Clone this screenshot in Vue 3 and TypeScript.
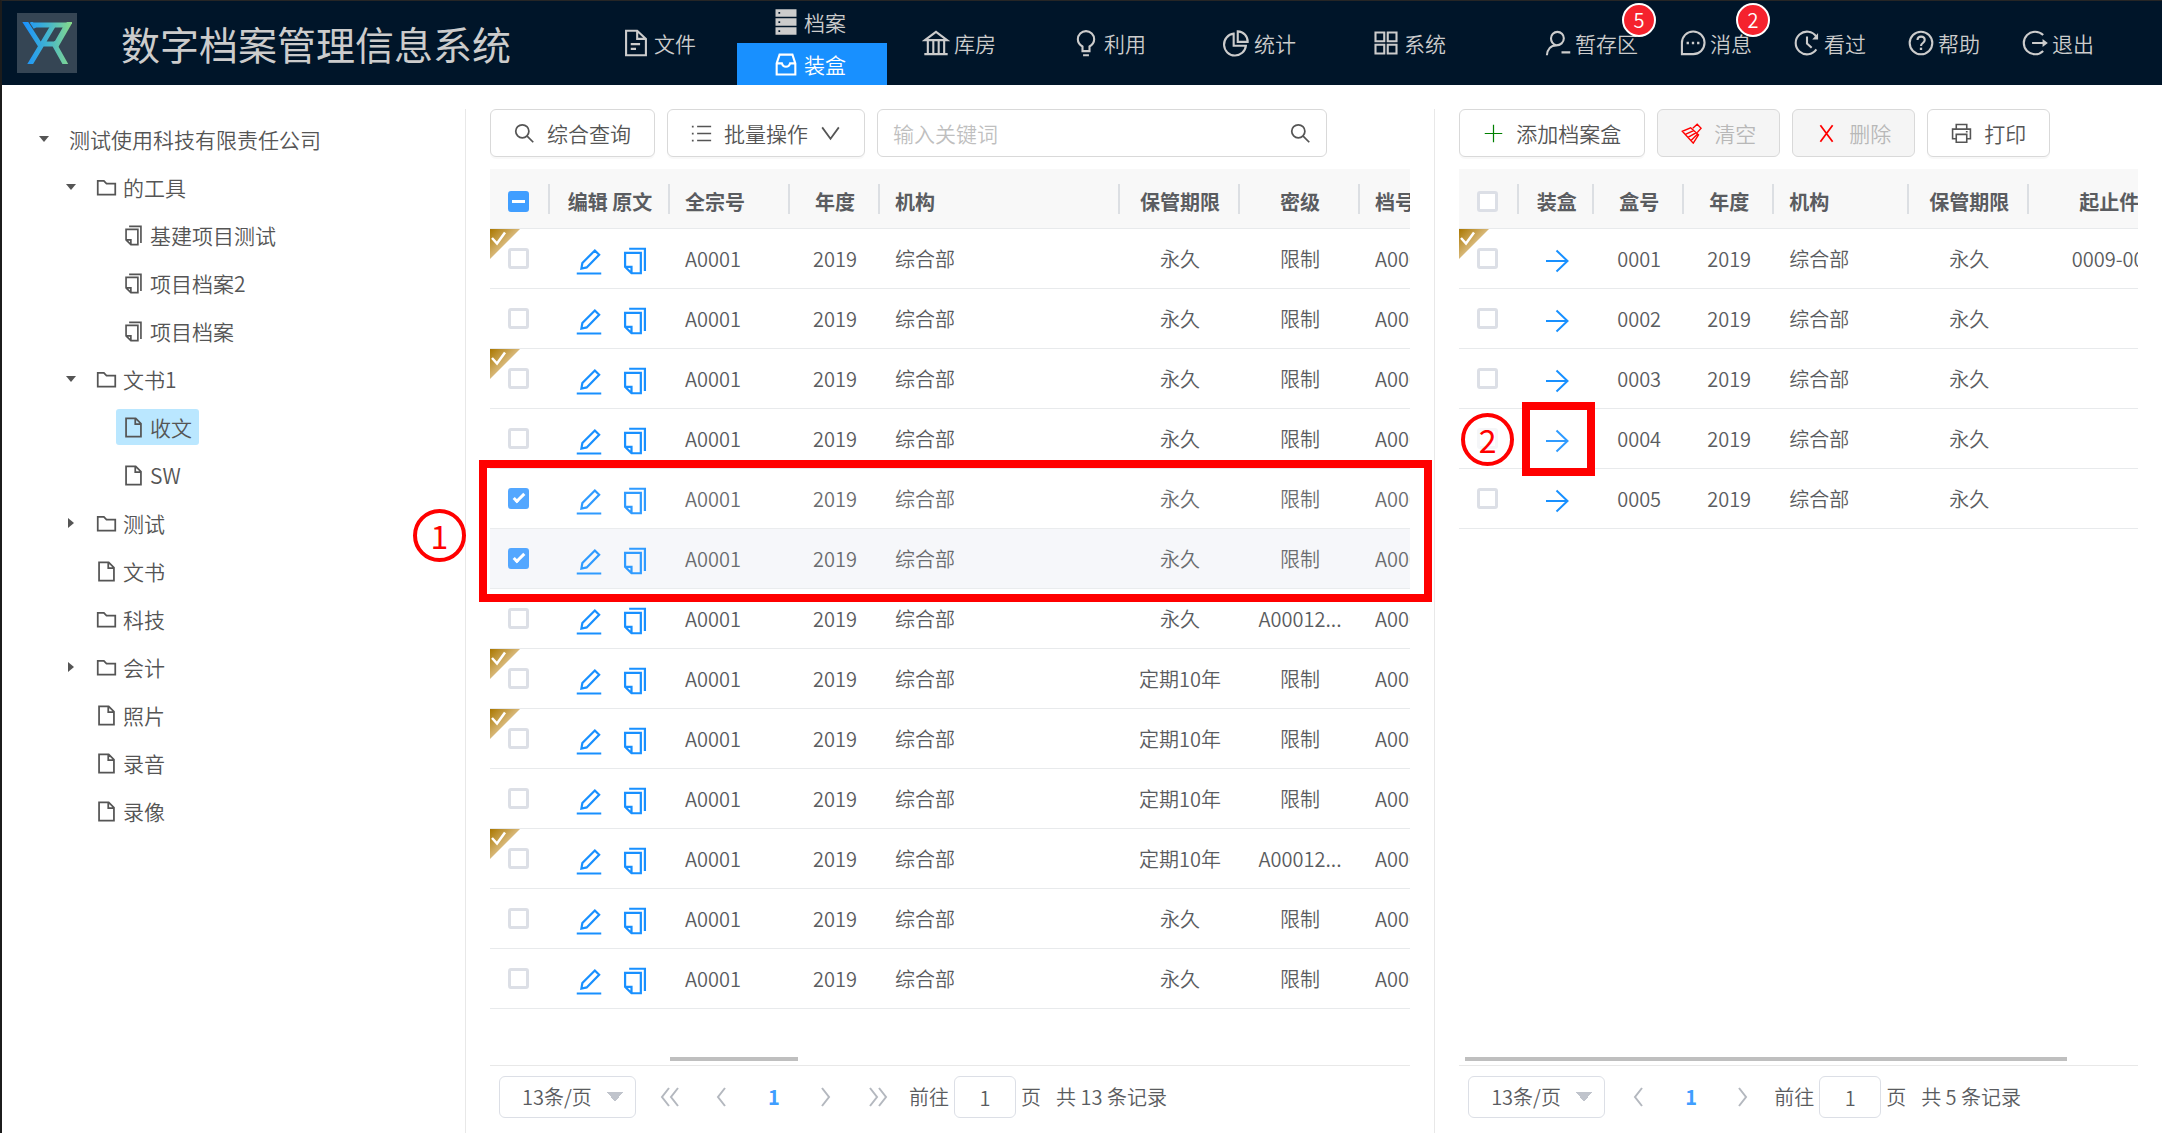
<script setup lang="ts">
import { computed, h, ref, type FunctionalComponent } from 'vue'

interface Shape { d: string; fill?: string; w?: number }
interface NavItem { label: string; icon: string; sub?: { label: string; icon: string } }
interface UserItem { label: string; icon: string; badge?: number }
interface TreeNode { label: string; level: number; icon?: string; caret?: 'open' | 'closed'; active?: boolean }
interface FileRow { id: number; packed: boolean; checked: boolean; hover: boolean; period: string; secret: string }
interface BoxRow { no: string; packed: boolean; range: string; checked: boolean }

const icons: Record<string, Shape[]> = {
  fileText: [{ d: 'M3.5 1.5H13l7.500 7V22.500h-17zM13 1.500v7h7.500M7.500 13h8M7.500 17h4.500', w: 1.8 }],
  server: [
    { d: 'M3 1h18v6.400H3zM3 8.800h18v6.400H3zM3 16.600h18V23H3z', fill: 'currentColor' },
    { d: 'M5.500 3.500H7V5H5.500zM5.500 11.300H7v1.500H5.500zM5.500 19H7v1.500H5.500z', fill: '#001529' },
  ],
  box: [{ d: 'M4 11.500L6.500 4h11L20 11.500V21H4zM4 11.500h4.500c.5 1.800 1.600 2.800 3.500 2.800s3-1 3.500-2.800H20', w: 1.8 }],
  bank: [{ d: 'M2.500 9.500L12 2.500l9.500 7zM5 10v11M9.700 10v11M14.300 10v11M19 10v11M2 21.500h20', w: 1.8 }],
  bulb: [{ d: 'M9 19v-4C6.500 13.500 5 11.500 5 8.800a7 7 0 0 1 14 0c0 2.700-1.500 4.700-4 6.200v4zM9.500 22.500h5', w: 1.8 }],
  pie: [{ d: 'M10 4a9.400 9.400 0 1 0 10.500 10.300H10zM13.500 2v9h8.500A8.800 8.800 0 0 0 13.500 2z', w: 1.8 }],
  grid: [{ d: 'M3 3h7.500v7.500H3zM13.500 3H21v7.500h-7.500zM3 13.500h7.500V21H3zM13.500 13.500H21V21h-7.500z', w: 1.8 }],
  user: [{ d: 'M2.500 22.500c.4-5.300 3.500-8.500 8-8.500 3.600 0 6.500-2.500 6.500-6A5.500 5.500 0 0 0 6 8c0 2.600 1.700 5.200 4.500 6M15 20h7.500', w: 1.8 }],
  message: [
    { d: 'M2.500 21.500V12A9.700 9.700 0 1 1 12 21.500z', w: 1.8 },
    { d: 'M6.500 11h2v2h-2zM11 11h2v2h-2zM15.500 11h2v2h-2z', fill: 'currentColor' },
  ],
  history: [
    { d: 'M20 6.500a9.700 9.700 0 1 0 0 11M12 6.500v6l4 3.500', w: 1.8 },
    { d: 'M21.500 3.500v5.500h-5z', fill: 'currentColor' },
  ],
  question: [
    { d: 'M12 2.300a9.700 9.700 0 1 0 0 19.400 9.700 9.700 0 0 0 0-19.400zM9 9.500c0-4 6.200-4 6.200 0 0 2.500-3.200 2.500-3.200 5', w: 1.8 },
    { d: 'M11 16h2v2h-2z', fill: 'currentColor' },
  ],
  logout: [
    { d: 'M19 5.200a9.700 9.700 0 1 0 0 13.600M9.500 12H20', w: 1.8 },
    { d: 'M18.500 8.500L23 12l-4.500 3.500z', fill: 'currentColor' },
  ],
  folder: [{ d: 'M2 4.500h7l3 3h10V20H2z' }],
  file: [{ d: 'M3.500 1.500h11l6 6v15h-17zM14 1.500V8h6.500' }],
  copy: [{ d: 'M7 1.500h13.500v19M3.500 5h13.500v17.500H9L3.500 17zM3.500 17H9v5.500', w: 1.9 }],
  search: [{ d: 'M9.500 2a7.500 7.500 0 1 0 0 15 7.500 7.500 0 0 0 0-15zM15 15l7 7' }],
  list: [
    { d: 'M7 4h16M7 12h16M7 20h16', w: 1.7 },
    { d: 'M1 3h2v2H1zM1 11h2v2H1zM1 19h2v2H1z', fill: 'currentColor' },
  ],
  down: [{ d: 'M2.500 5L12 18l9.500-13' }],
  plus: [{ d: 'M12 2v20M2 12h20', w: 1.4 }],
  clear: [{ d: 'M13.500 6L18.500 1.500 23 6l-4.500 5M11 5.500l9 8L14 23 1.500 9.500zM5 13l10-4.500M8 16.500l9.500-5.500M11.500 20l7.500-7.500', w: 1.6 }],
  close: [{ d: 'M5 2.500l14 19M19 2.500L5 21.500' }],
  printer: [{ d: 'M6 7V1.800h12V7M6 18H1.800V7h20.400v11H18M6 13h12v9H6zM17 10h2', w: 1.8 }],
  edit: [{ d: 'M1.500 22.700h21M5.500 18.500l.8-4.800L17 3l3.700 3.700L10 17.500z', w: 1.9 }],
  arrow: [{ d: 'M1 12h21M11.500 1.500L22.500 12 11.500 22.500' }],
}

const Icon: FunctionalComponent<{ name: string }> = (props) =>
  h(
    'svg',
    { viewBox: '0 0 24 24', 'aria-hidden': 'true' },
    icons[props.name].map((s) =>
      h('path', {
        d: s.d,
        fill: s.fill ?? 'none',
        stroke: s.fill ? 'none' : 'currentColor',
        'stroke-width': s.w ?? 2,
      }),
    ),
  )

const nav: NavItem[] = [
  { label: '文件', icon: 'fileText' },
  { label: '档案', icon: 'server', sub: { label: '装盒', icon: 'box' } },
  { label: '库房', icon: 'bank' },
  { label: '利用', icon: 'bulb' },
  { label: '统计', icon: 'pie' },
  { label: '系统', icon: 'grid' },
]

const userItems: UserItem[] = [
  { label: '暂存区', icon: 'user', badge: 5 },
  { label: '消息', icon: 'message', badge: 2 },
  { label: '看过', icon: 'history' },
  { label: '帮助', icon: 'question' },
  { label: '退出', icon: 'logout' },
]

const tree: TreeNode[] = [
  { label: '测试使用科技有限责任公司', level: 1, caret: 'open' },
  { label: '的工具', level: 2, icon: 'folder', caret: 'open' },
  { label: '基建项目测试', level: 3, icon: 'copy' },
  { label: '项目档案2', level: 3, icon: 'copy' },
  { label: '项目档案', level: 3, icon: 'copy' },
  { label: '文书1', level: 2, icon: 'folder', caret: 'open' },
  { label: '收文', level: 3, icon: 'file', active: true },
  { label: 'SW', level: 3, icon: 'file' },
  { label: '测试', level: 2, icon: 'folder', caret: 'closed' },
  { label: '文书', level: 2, icon: 'file' },
  { label: '科技', level: 2, icon: 'folder' },
  { label: '会计', level: 2, icon: 'folder', caret: 'closed' },
  { label: '照片', level: 2, icon: 'file' },
  { label: '录音', level: 2, icon: 'file' },
  { label: '录像', level: 2, icon: 'file' },
]

const packedRows = [1, 3, 8, 9, 11]
const files = ref<FileRow[]>(
  Array.from({ length: 13 }, (_, i) => {
    const id = i + 1
    return {
      id,
      packed: packedRows.includes(id),
      checked: id === 5 || id === 6,
      hover: id === 6,
      period: id >= 8 && id <= 11 ? '定期10年' : '永久',
      secret: id === 7 || id === 11 ? 'A00012...' : '限制',
    }
  }),
)

const boxes = ref<BoxRow[]>(
  ['0001', '0002', '0003', '0004', '0005'].map((no, i) => ({
    no,
    packed: i === 0,
    range: i === 0 ? '0009-0010' : '',
    checked: false,
  })),
)

const someChecked = computed(() => files.value.some((f) => f.checked) && !files.value.every((f) => f.checked))
const keyword = ref('')
const filePage = ref('1')
const boxPage = ref('1')
</script>

<template>
  <div class="app">
    <header class="top">
      <svg class="logo" viewBox="0 0 60 60" aria-hidden="true">
        <defs>
          <linearGradient id="logo-g" x1="6" y1="0" x2="54" y2="0" gradientUnits="userSpaceOnUse">
            <stop offset="0" stop-color="#1890ff" />
            <stop offset=".5" stop-color="#41b3d0" />
            <stop offset="1" stop-color="#86d98a" />
          </linearGradient>
          <clipPath id="logo-c"><rect x="5" y="9" width="50" height="42" /></clipPath>
        </defs>
        <rect width="60" height="60" fill="#354554" />
        <g clip-path="url(#logo-c)" fill="none" stroke="url(#logo-g)" stroke-width="5">
          <path d="M7 7l16 25M36 13L12 53M24 31h13M36 29l14 25" />
          <path d="M16 12h34L38 33" />
          <path d="M14 9l4 6" stroke-width="3" />
          <path d="M54 7L39 33" />
        </g>
      </svg>
      <h1>数字档案管理信息系统</h1>
      <nav class="nav">
        <div v-for="n in nav" :key="n.label" class="nav-item">
          <a href="#" class="nav-link">
            <Icon :name="n.icon" class="ico ico-lg" />
            <span>{{ n.label }}</span>
          </a>
          <a v-if="n.sub" href="#" class="nav-link current">
            <Icon :name="n.sub.icon" class="ico ico-lg" />
            <span>{{ n.sub.label }}</span>
          </a>
        </div>
      </nav>
      <div class="user-nav">
        <a v-for="u in userItems" :key="u.label" href="#" class="user-link">
          <Icon :name="u.icon" class="ico ico-lg" />
          <span>{{ u.label }}</span>
          <span v-if="u.badge" class="badge">{{ u.badge }}</span>
        </a>
      </div>
    </header>

    <main class="body">
      <aside class="side">
        <ul class="tree">
          <li v-for="(t, i) in tree" :key="i" :class="['node', 'level-' + t.level]">
            <span class="caret-slot"><i v-if="t.caret" :class="['caret', t.caret]"></i></span>
            <a href="#" class="node-label" :class="{ active: t.active }">
              <Icon v-if="t.icon" :name="t.icon" class="ico" />
              <span>{{ t.label }}</span>
            </a>
          </li>
        </ul>
        <span class="mark mark-one">1</span>
      </aside>

      <section class="panel files">
        <div class="toolbar">
          <button type="button" class="btn"><Icon name="search" class="ico" /><span>综合查询</span></button>
          <button type="button" class="btn">
            <Icon name="list" class="ico" /><span>批量操作</span><Icon name="down" class="ico" />
          </button>
          <label class="search">
            <input v-model="keyword" type="text" placeholder="输入关键词" aria-label="输入关键词" />
            <Icon name="search" class="ico" />
          </label>
        </div>

        <div class="grid">
          <table class="file-table">
            <colgroup>
              <col class="w60" /><col class="w120" /><col class="w120" /><col class="w90" />
              <col class="w240" /><col class="w120" /><col class="w120" /><col class="w180" />
            </colgroup>
            <thead>
              <tr>
                <th><input type="checkbox" class="check" aria-label="全选" :indeterminate="someChecked" /></th>
                <th>编辑 原文</th>
                <th class="left">全宗号</th>
                <th>年度</th>
                <th class="left">机构</th>
                <th>保管期限</th>
                <th>密级</th>
                <th class="left">档号</th>
              </tr>
            </thead>
            <tbody>
              <tr v-for="f in files" :key="f.id" :class="{ hover: f.hover }">
                <td class="check-cell">
                  <svg v-if="f.packed" class="corner" viewBox="0 0 30 30" aria-hidden="true">
                    <path d="M0 0h30L0 30z" fill="url(#gold)" />
                    <path d="M2 9l5 5.500L15 3.500" fill="none" stroke="#fff" stroke-width="2.500" />
                  </svg>
                  <input v-model="f.checked" type="checkbox" class="check" :aria-label="'选择第' + f.id + '行'" />
                </td>
                <td>
                  <div class="actions pair">
                    <button type="button" class="link" aria-label="编辑"><Icon name="edit" class="ico ico-lg" /></button>
                    <button type="button" class="link" aria-label="原文"><Icon name="copy" class="ico ico-lg" /></button>
                  </div>
                </td>
                <td class="left">A0001</td>
                <td>2019</td>
                <td class="left">综合部</td>
                <td>{{ f.period }}</td>
                <td>{{ f.secret }}</td>
                <td class="left">A0001</td>
              </tr>
            </tbody>
          </table>
          <div class="track"><div class="thumb thumb-files"></div></div>
        </div>

        <div class="pager">
          <select aria-label="每页条数"><option>13条/页</option></select>
          <div class="pages">
            <button type="button" aria-label="首页">
              <svg viewBox="0 0 20 20" aria-hidden="true"><path d="M9 1L2 10l7 9M18 1l-7 9 7 9" /></svg>
            </button>
            <button type="button" aria-label="上一页">
              <svg viewBox="0 0 20 20" aria-hidden="true"><path d="M13 1l-7 9 7 9" /></svg>
            </button>
            <button type="button" class="on">1</button>
            <button type="button" aria-label="下一页">
              <svg viewBox="0 0 20 20" aria-hidden="true"><path d="M6 1l7 9-7 9" /></svg>
            </button>
            <button type="button" aria-label="末页">
              <svg viewBox="0 0 20 20" aria-hidden="true"><path d="M2 1l7 9-7 9M11 1l7 9-7 9" /></svg>
            </button>
          </div>
          <label class="jump">前往 <input v-model="filePage" type="text" /> 页</label>
          <span class="total">共 13 条记录</span>
        </div>
        <div class="frame frame-rows"></div>
      </section>

      <section class="panel boxes">
        <div class="toolbar">
          <button type="button" class="btn"><Icon name="plus" class="ico green" /><span>添加档案盒</span></button>
          <button type="button" class="btn" disabled><Icon name="clear" class="ico red" /><span>清空</span></button>
          <button type="button" class="btn" disabled><Icon name="close" class="ico red" /><span>删除</span></button>
          <button type="button" class="btn"><Icon name="printer" class="ico" /><span>打印</span></button>
        </div>

        <div class="grid">
          <table class="box-table">
            <colgroup>
              <col class="w60" /><col class="w75" /><col class="w90" /><col class="w90" />
              <col class="w135" /><col class="w120" /><col class="w180" />
            </colgroup>
            <thead>
              <tr>
                <th><input type="checkbox" class="check" aria-label="全选" /></th>
                <th>装盒</th>
                <th>盒号</th>
                <th>年度</th>
                <th class="left">机构</th>
                <th>保管期限</th>
                <th>起止件号</th>
              </tr>
            </thead>
            <tbody>
              <tr v-for="(b, bi) in boxes" :key="b.no">
                <td class="check-cell">
                  <svg v-if="b.packed" class="corner" viewBox="0 0 30 30" aria-hidden="true">
                    <path d="M0 0h30L0 30z" fill="url(#gold)" />
                    <path d="M2 9l5 5.500L15 3.500" fill="none" stroke="#fff" stroke-width="2.500" />
                  </svg>
                  <input v-model="b.checked" type="checkbox" class="check" :aria-label="'选择盒' + b.no" />
                  <span v-if="bi === 3" class="mark mark-two">2</span>
                </td>
                <td class="pack-cell">
                  <div class="actions">
                    <button type="button" class="link" aria-label="装盒"><Icon name="arrow" class="ico ico-md" /></button>
                  </div>
                  <div v-if="bi === 3" class="frame frame-pack"></div>
                </td>
                <td>{{ b.no }}</td>
                <td>2019</td>
                <td class="left">综合部</td>
                <td>永久</td>
                <td>{{ b.range }}</td>
              </tr>
            </tbody>
          </table>
          <div class="track"><div class="thumb thumb-boxes"></div></div>
        </div>

        <div class="pager">
          <select aria-label="每页条数"><option>13条/页</option></select>
          <div class="pages">
            <button type="button" aria-label="上一页">
              <svg viewBox="0 0 20 20" aria-hidden="true"><path d="M13 1l-7 9 7 9" /></svg>
            </button>
            <button type="button" class="on">1</button>
            <button type="button" aria-label="下一页">
              <svg viewBox="0 0 20 20" aria-hidden="true"><path d="M6 1l7 9-7 9" /></svg>
            </button>
          </div>
          <label class="jump">前往 <input v-model="boxPage" type="text" /> 页</label>
          <span class="total">共 5 条记录</span>
        </div>
      </section>
    </main>

    <svg class="defs" width="0" height="0" aria-hidden="true">
      <defs>
        <linearGradient id="gold" x1="0" y1="0" x2=".5" y2=".5">
          <stop offset="0" stop-color="#aa7700" />
          <stop offset="1" stop-color="#d8b878" />
        </linearGradient>
      </defs>
    </svg>
  </div>
</template>

<style>
body {
  margin: 0;
  background: #fff;
}
</style>

<style scoped>
.app {
  display: flex;
  flex-direction: column;
  min-height: 100vh;
  box-sizing: border-box;
  border-top: 1px solid #262626;
  border-left: 2px solid #1c1c1c;
  font-family: "Noto Sans CJK SC", "Noto Sans", sans-serif;
  font-weight: 350;
  font-size: 21px;
  line-height: 30px;
  color: #555;
  overflow: hidden;
}
.app *,
.app *::before,
.app *::after {
  box-sizing: border-box;
}
a {
  color: inherit;
  text-decoration: none;
}
button,
input,
select {
  font: inherit;
  color: inherit;
}
.defs {
  position: absolute;
}
.ico {
  width: 21px;
  height: 21px;
  flex: none;
  display: block;
}
.ico-md {
  width: 24px;
  height: 24px;
}
.ico-lg {
  width: 28px;
  height: 28px;
}

/* header */
.top {
  display: flex;
  align-items: center;
  height: 84px;
  padding: 0 68px 0 15px;
  background: #001529;
  color: #ccc;
}
.logo {
  width: 60px;
  height: 60px;
  flex: none;
}
.top h1 {
  flex: none;
  margin: 0 76px 0 44px;
  font-size: 39px;
  line-height: 60px;
  font-weight: 400;
  white-space: nowrap;
}
.nav {
  display: flex;
  align-self: stretch;
}
.nav-item {
  display: flex;
  flex-direction: column;
  width: 150px;
}
.nav-link {
  flex: 1;
  display: flex;
  align-items: center;
  justify-content: center;
  gap: 4px;
  padding-right: 6px;
}
.nav-link.current {
  background: #1890ff;
  color: #fff;
}
.user-nav {
  display: flex;
  gap: 41px;
  margin-left: auto;
}
.user-link {
  position: relative;
  display: flex;
  align-items: center;
  gap: 3px;
}
.badge {
  position: absolute;
  right: -18px;
  bottom: 21px;
  width: 34px;
  height: 34px;
  border: 2px solid #fff;
  border-radius: 50%;
  background: #f5222d;
  color: #fff;
  font-size: 20px;
  text-align: center;
}

/* layout */
.body {
  flex: 1;
  display: grid;
  grid-template-columns: 464px minmax(0, 4fr) minmax(0, 3fr);
  padding-top: 24px;
}
.side {
  position: relative;
  border-right: 1px solid #e8e8e8;
}
.tree {
  list-style: none;
  margin: 0;
  padding: 6px 0 0 24px;
}
.node {
  display: flex;
  align-items: center;
  height: 48px;
}
.level-2 {
  padding-left: 27px;
}
.level-3 {
  padding-left: 54px;
}
.caret-slot {
  width: 36px;
  display: flex;
  justify-content: center;
}
.caret {
  border: 5px solid transparent;
}
.caret.open {
  border-top: 6px solid #555;
  border-bottom: 0;
}
.caret.closed {
  border-left: 6px solid #555;
  border-right: 0;
}
.node-label {
  display: flex;
  align-items: center;
  gap: 6px;
  height: 36px;
  padding: 0 7px;
  border-radius: 3px;
}
.node-label.active {
  background: #bae7ff;
}

.panel {
  position: relative;
  display: flex;
  flex-direction: column;
  padding: 0 24px;
}
.files {
  border-right: 1px solid #e8e8e8;
}
.toolbar {
  display: flex;
  gap: 12px;
  margin-bottom: 12px;
}
.btn {
  display: flex;
  align-items: center;
  gap: 12px;
  flex: none;
  height: 48px;
  padding: 0 23px;
  border: 1px solid #d9d9d9;
  border-radius: 6px;
  background: #fff;
  box-shadow: 0 2px 1px #f8f8f8;
  white-space: nowrap;
}
.btn:disabled {
  background: #f5f5f5;
  color: #b8b8b8;
  box-shadow: none;
}
.green {
  color: #008000;
}
.red {
  color: #f00;
}
.search {
  display: flex;
  align-items: center;
  width: 450px;
  height: 48px;
  padding: 0 15px;
  border: 1px solid #d9d9d9;
  border-radius: 6px;
}
.search input {
  flex: 1;
  min-width: 0;
  padding: 0;
  border: 0;
  outline: 0;
  background: none;
}
.search input::placeholder {
  color: #bfbfbf;
}

/* tables */
.grid {
  flex: 1;
  display: flex;
  flex-direction: column;
  overflow: hidden;
  border-bottom: 1px solid #e8e8e8;
}
table {
  table-layout: fixed;
  border-collapse: separate;
  border-spacing: 0;
  font-size: 20px;
  color: #5a5c60;
}
.file-table {
  width: 1050px;
}
.box-table {
  width: 750px;
}
.w60 { width: 60px; }
.w75 { width: 75px; }
.w90 { width: 90px; }
.w120 { width: 120px; }
.w135 { width: 135px; }
.w180 { width: 180px; }
.w240 { width: 240px; }
th,
td {
  height: 60px;
  padding: 0;
  border-bottom: 1px solid #e8eaec;
  text-align: center;
  white-space: nowrap;
}
th {
  padding-top: 6px;
  background:
    linear-gradient(#dcdfe3, #dcdfe3) right 0 top 15px / 2px 30px no-repeat,
    #f8f8f8;
  font-weight: 700;
}
th.left,
td.left {
  padding-left: 15px;
  text-align: left;
}
.hover td {
  background: #f5f7fa;
}
.check-cell,
.pack-cell {
  position: relative;
}
.corner {
  position: absolute;
  left: 0;
  top: 0;
  width: 30px;
  height: 30px;
}
.check {
  position: relative;
  appearance: none;
  display: block;
  width: 21px;
  height: 21px;
  margin: 0 0 0 18px;
  border: 3px solid #dcdfe6;
  border-radius: 3px;
  background: #fff;
}
.check:checked,
.check:indeterminate {
  border-color: #409eff;
  background: #409eff;
}
.check:checked::after {
  content: "";
  position: absolute;
  left: 5px;
  top: 0;
  width: 6px;
  height: 12px;
  border: solid #fff;
  border-width: 0 3px 3px 0;
  transform: rotate(45deg);
}
.check:indeterminate::after {
  content: "";
  position: absolute;
  left: 1px;
  top: 6px;
  width: 13px;
  height: 3px;
  background: #fff;
}
.actions {
  display: flex;
  justify-content: center;
  padding-top: 4px;
}
.pair {
  gap: 18px;
  padding-left: 4px;
}
.link {
  padding: 0;
  border: 0;
  background: none;
  color: #1890ff;
}
.track {
  margin-top: auto;
  padding: 0 6px 4px;
}
.thumb {
  height: 4px;
  background: #bfbfbf;
}
.thumb-files {
  width: 128px;
  margin-left: 174px;
}
.thumb-boxes {
  width: 602px;
}

/* pager */
.pager {
  display: flex;
  align-items: center;
  height: 67px;
  padding: 0 9px 5px;
  font-size: 20px;
  color: #5a5c60;
  white-space: nowrap;
}
.pager select {
  appearance: none;
  width: 137px;
  height: 42px;
  padding: 0 22px;
  border: 1px solid #dcdfe6;
  border-radius: 6px;
  background: linear-gradient(to bottom right, #c0c4cc 50%, transparent 50%) right 12px center / 8px 10px no-repeat,
    linear-gradient(to bottom left, #c0c4cc 50%, transparent 50%) right 20px center / 8px 10px no-repeat, #fff;
}
.pages {
  display: flex;
  margin: 0 5px 0 8px;
}
.pages button {
  display: flex;
  align-items: center;
  justify-content: center;
  width: 52px;
  height: 42px;
  padding: 0;
  border: 0;
  background: none;
}
.pages svg {
  width: 20px;
  height: 20px;
  fill: none;
  stroke: #b4b8bf;
  stroke-width: 2;
}
.pages .on {
  color: #409eff;
  font-weight: 700;
}
.jump {
  display: flex;
  align-items: center;
  gap: 5px;
}
.jump input {
  width: 62px;
  height: 42px;
  padding: 0;
  border: 1px solid #dcdfe6;
  border-radius: 6px;
  text-align: center;
}
.total {
  margin-left: 15px;
}

/* step marks */
.frame {
  position: absolute;
  border: 8px solid #f00;
  background: rgba(255, 255, 255, 0.1);
  pointer-events: none;
}
.frame-rows {
  left: 13px;
  right: 2px;
  top: 351px;
  height: 142px;
}
.frame-pack {
  left: 3px;
  top: -7px;
  width: 73px;
  height: 74px;
}
.mark {
  position: absolute;
  width: 53px;
  height: 53px;
  border: 4px solid #f00;
  border-radius: 50%;
  background: rgba(255, 255, 255, 0.7);
  color: #f00;
  font-size: 32px;
  font-weight: 400;
  line-height: 44px;
  text-align: center;
}
.mark-one {
  right: -1px;
  top: 400px;
}
.mark-two {
  left: 2px;
  top: 4px;
}
</style>
